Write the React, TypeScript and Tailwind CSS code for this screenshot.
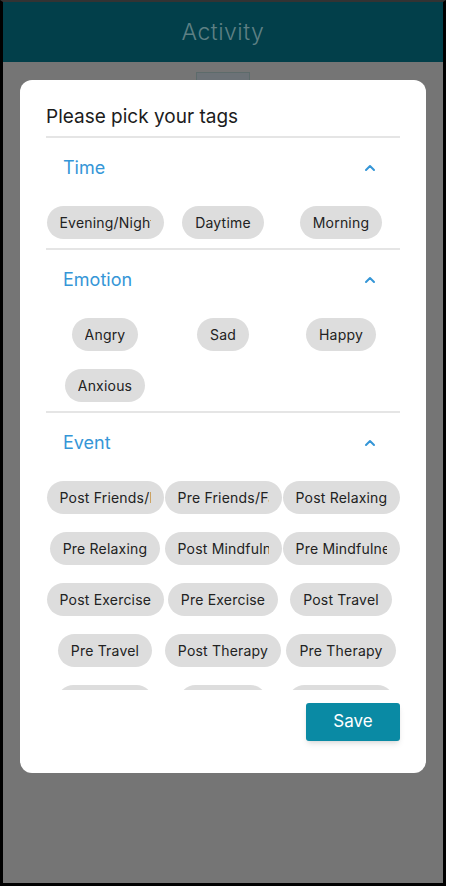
import React from "react";
import { ChevronUp } from "lucide-react";

type Section = {
  title: string;
  tags: string[];
};

const sections: Section[] = [
  { title: "Time", tags: ["Evening/Night", "Daytime", "Morning"] },
  { title: "Emotion", tags: ["Angry", "Sad", "Happy", "Anxious"] },
  {
    title: "Event",
    tags: [
      "Post Friends/Family",
      "Pre Friends/Family",
      "Post Relaxing",
      "Pre Relaxing",
      "Post Mindfulness",
      "Pre Mindfulness",
      "Post Exercise",
      "Pre Exercise",
      "Post Travel",
      "Pre Travel",
      "Post Therapy",
      "Pre Therapy",
      "Post Work",
      "Pre Work",
      "Post School",
    ],
  },
];

// chip text is clipped inside the padding, like the app does
const Chip: React.FC<{ label: string }> = ({ label }) => (
  <div className="flex h-[51px] items-center justify-center">
    <div className="flex h-[33px] max-w-[117px] items-center rounded-full bg-[#dddddd] px-[13px]">
      <span className="block overflow-hidden whitespace-nowrap text-[14px] tracking-[0.2px] text-[#222222]">
        {label}
      </span>
    </div>
  </div>
);

const TagSection: React.FC<{ section: Section; last?: boolean }> = ({ section, last }) => (
  <div className={last ? "" : "border-b-2 border-[#e5e5e5]"}>
    <div className="flex h-[59px] items-center justify-between pl-[17px] pr-[22px]">
      <span className="text-[18px] text-[#3596d7]">{section.title}</span>
      <ChevronUp size={16} strokeWidth={3} className="text-[#3596d7]" />
    </div>
    <div className="grid grid-cols-3">
      {section.tags.map((tag) => (
        <Chip key={tag} label={tag} />
      ))}
    </div>
  </div>
);

export default function App() {
  return (
    <div className="h-[892px] w-[452px] bg-white" style={{ fontFamily: "Inter, 'Noto Sans', sans-serif" }}>
      <div className="relative h-[886px] w-[446px] overflow-hidden border-x-[3px] border-b-[3px] border-t-2 border-black border-t-[#333333] bg-[#757575]">
        <div className="flex h-[60px] items-center justify-center bg-[#023f4a]">
          <span className="text-[23px] font-light tracking-[0.5px] text-[#5e8084]">Activity</span>
        </div>
        <div className="mx-auto mt-[10px] h-[12px] w-[54px] border border-[#5d6b6b] bg-[#6c7277]" />

        {/* dialog */}
        <div className="absolute left-[17px] top-[78px] flex h-[693px] w-[406px] flex-col rounded-xl bg-white px-[26px] pb-[32px] pt-[24px]">
          <div className="border-b-2 border-[#e5e5e5] pb-[6px] text-[19px] leading-[26px] text-[#1c1c1c]">
            Please pick your tags
          </div>
          <div className="h-[552px] overflow-hidden">
            {sections.map((s, i) => (
              <TagSection key={s.title} section={s} last={i === sections.length - 1} />
            ))}
          </div>
          <div className="mt-[13px] flex justify-end">
            <button className="h-[38px] w-[94px] rounded-[3px] bg-[#0a8aa4] text-[17px] text-white shadow-md">
              Save
            </button>
          </div>
        </div>
      </div>
    </div>
  );
}
